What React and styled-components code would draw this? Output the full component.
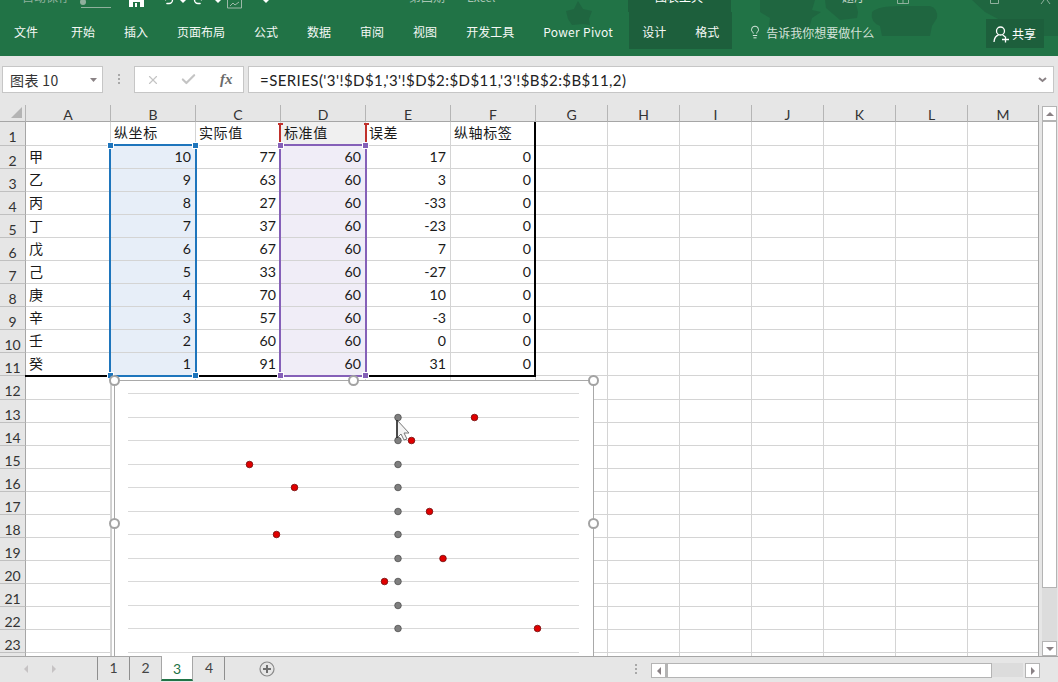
import React from 'react';
import styled, { createGlobalStyle } from 'styled-components';
import { Lightbulb, X, Check, Undo2, Redo2 } from 'lucide-react';

const GlobalStyle = createGlobalStyle`
  html, body { margin: 0; padding: 0; background: #fff; }
  body { font-family: "Noto Sans CJK SC", "Noto Sans", sans-serif; }
`;

const CJK = '"Noto Sans CJK SC", "Noto Sans", sans-serif';
const GREEN = '#217346';
const DARK = '#1d5f3c';

const Page = styled.div`
  width: 1058px;
  height: 682px;
  display: flex;
  flex-direction: column;
  overflow: hidden;
  background: #e6e6e6;
`;

// ribbon
const Ribbon = styled.div`
  position: relative;
  height: 56px;
  flex: none;
  background: ${GREEN};
  color: #fff;
`;

const Decor = styled.svg`
  position: absolute;
  left: 0;
  top: 0;
`;

const TitleRow = styled.div`
  position: relative;
  display: flex;
  height: 12px;
  padding-left: 22px;
  overflow: hidden;
`;

const TitleSlot = styled.div`
  flex: none;
  width: ${p => p.$w}px;
  height: 12px;
  padding-left: ${p => p.$pl || 0}px;
  box-sizing: border-box;
  background: ${p => (p.$dark ? DARK : 'transparent')};
  color: ${p => p.$color || '#fff'};
  font-size: 12px;
  line-height: 14px;
  white-space: nowrap;

  & > span {
    display: block;
    margin-top: -10px;
  }
  & > svg {
    display: block;
  }
`;

const UndoIcon = styled(Undo2)`
  margin-top: -9px;
`;

const RedoIcon = styled(Redo2)`
  margin-top: -9px;
`;

const TabRow = styled.div`
  position: relative;
  display: flex;
  align-items: flex-start;
  height: 44px;
`;

const Tab = styled.div`
  flex: none;
  height: 37px;
  line-height: 40px;
  padding: 0 14.5px;
  margin-left: ${p => p.$ml || 0}px;
  font-size: 12px;
  letter-spacing: ${p => p.$ls || 0}px;
  color: #f4f8f5;
  white-space: nowrap;
`;

const ContextTabs = styled.div`
  display: flex;
  flex: none;
  width: 103px;
  height: 37px;
  margin-left: 1.5px;
  background: ${DARK};
  box-sizing: border-box;
  padding-left: 13px;
  & > div {
    padding: 0;
    margin-right: 29px;
  }
`;

const TellMe = styled.div`
  display: flex;
  align-items: center;
  gap: 4px;
  flex: none;
  height: 40px;
  margin-left: 16px;
  font-size: 12px;
  color: #d3e2d9;
  white-space: nowrap;
`;

const ShareButton = styled.div`
  position: absolute;
  left: 986px;
  top: 7px;
  width: 58px;
  height: 29px;
  display: flex;
  align-items: center;
  gap: 2px;
  padding-left: 7px;
  box-sizing: border-box;
  background: ${DARK};
  font-size: 12px;
`;

// formula bar
const FormulaBar = styled.div`
  flex: none;
  height: 49px;
  box-sizing: border-box;
  padding: 10px 4px 12px 2px;
  display: flex;
  background: #e6e6e6;
`;

const Field = styled.div`
  flex: ${p => (p.$grow ? 1 : 'none')};
  width: ${p => (p.$w ? `${p.$w}px` : 'auto')};
  margin-left: ${p => p.$ml || 0}px;
  box-sizing: border-box;
  display: flex;
  align-items: center;
  background: #fff;
  border: 1px solid #c6c6c6;
`;

const NameText = styled.span`
  flex: 1;
  padding-left: 7px;
  font-size: 14px;
  letter-spacing: 0.4px;
  color: #333;
`;

const NameArrow = styled.svg`
  margin-right: 5px;
`;

const FormulaArrow = styled.svg`
  margin-left: auto;
  margin-right: 6px;
`;

const Dots = styled.div`
  width: 2px;
  height: 10px;
  margin: ${p => p.$m};
  flex: none;
  background: repeating-linear-gradient(to bottom, #a8a8a8 0 2px, transparent 2px 4px);
`;

const CancelIcon = styled(X)`
  margin-left: 11px;
`;

const EnterIcon = styled(Check)`
  margin-left: 20px;
`;

const Fx = styled.span`
  font-family: "Liberation Serif", serif;
  font-style: italic;
  font-weight: 700;
  font-size: 15px;
  color: #6a6a6a;
  margin-left: 23px;
`;

const FormulaText = styled.span`
  padding-left: 11px;
  font-family: "Lato", sans-serif;
  font-size: 15px;
  letter-spacing: 0.43px;
  color: #222;
  white-space: nowrap;
`;

// sheet
const SheetArea = styled.div`
  flex: none;
  height: 551px;
  display: flex;
  background: #e6e6e6;
`;

const GridWrap = styled.div`
  position: relative;
  flex: none;
  width: 1039px;
  height: 551px;
  box-sizing: border-box;
  overflow: hidden;
  background: #fff;
  border-right: 1px solid #a6a6a6;
`;

const Grid = styled.div`
  display: grid;
  grid-template-columns: 26px repeat(6, 85px) repeat(6, 72px) 71px;
  grid-template-rows: 17px 24px repeat(23, 23.05px);
`;

const ColHead = styled.div`
  box-sizing: border-box;
  background: #e6e6e6;
  border-bottom: 1px solid #a6a6a6;
  border-right: 1px solid #b5b5b5;
  text-align: center;
  font-family: "Lato", sans-serif;
  font-size: 14px;
  line-height: 19px;
  color: #333;
  overflow: hidden;
`;

const Corner = styled(ColHead)`
  position: relative;
  &::after {
    content: '';
    position: absolute;
    right: 3px;
    bottom: 3px;
    border-style: solid;
    border-width: 0 0 11px 11px;
    border-color: transparent transparent #b4b4b4 transparent;
  }
`;

const RowHead = styled.div`
  box-sizing: border-box;
  background: #e6e6e6;
  border-bottom: 1px solid #c0c0c0;
  border-right: 1px solid #a6a6a6;
  text-align: center;
  font-family: "Lato", sans-serif;
  font-size: 14px;
  line-height: 29px;
  color: #333;
  overflow: hidden;
`;

const Cell = styled.div`
  box-sizing: border-box;
  border-right: 1px solid #d4d4d4;
  border-bottom: 1px solid #d4d4d4;
  background: ${p => p.$fill || '#fff'};
  padding: 0 4px 0 ${p => (p.$num ? 4 : 3)}px;
  text-align: ${p => (p.$num ? 'right' : 'left')};
  font-family: ${p => (p.$num ? '"Lato", sans-serif' : CJK)};
  font-size: ${p => (p.$num ? '14.2px' : '14px')};
  letter-spacing: ${p => (p.$num ? 0 : 0.6)}px;
  line-height: ${p => (p.$num ? 22 : 21)}px;
  color: #1a1a1a;
  white-space: nowrap;
  overflow: hidden;
`;

// overlays on top of the cells
const TableEdge = styled.div`
  position: absolute;
  left: ${p => p.$x}px;
  top: ${p => p.$y}px;
  width: ${p => p.$w}px;
  height: ${p => p.$h}px;
  background: #000;
`;

const Range = styled.div`
  position: absolute;
  left: ${p => p.$x}px;
  top: ${p => p.$y}px;
  width: ${p => p.$w}px;
  height: ${p => p.$h}px;
  box-sizing: border-box;
  border: 2px solid ${p => p.$color};
  border-bottom-width: ${p => (p.$open ? 0 : 2)}px;
  border-top-width: ${p => (p.$open ? 0 : 2)}px;
`;

const Grip = styled.div`
  position: absolute;
  left: ${p => p.$x - 3}px;
  top: ${p => p.$y - 3}px;
  width: 5px;
  height: 5px;
  background: ${p => p.$color};
  outline: 1px solid #fff;
`;

const Cap = styled.div`
  position: absolute;
  left: ${p => p.$x - 2}px;
  top: 18px;
  width: 5px;
  height: 2px;
  background: #c0302b;
`;

const ChartFrame = styled.div`
  position: absolute;
  left: 114px;
  top: 275px;
  width: 480px;
  height: 320px;
  box-sizing: border-box;
  background: #fff;
  border: 1px solid #a9a9a9;
  box-shadow: -2px 0 0 #fff, -3px 0 0 #cfcfcf;
`;

const ChartSvg = styled.svg`
  display: block;
`;

const Handle = styled.div`
  position: absolute;
  left: ${p => p.$x - 5}px;
  top: ${p => p.$y - 5}px;
  width: 11px;
  height: 11px;
  box-sizing: border-box;
  border: 2px solid #a3a3a3;
  border-radius: 50%;
  background: #fff;
`;

const Pointer = styled.svg`
  position: absolute;
  left: 392px;
  top: 312px;
`;

// scrollbars
const VScroll = styled.div`
  flex: none;
  width: 19px;
  box-sizing: border-box;
  padding: 1px 1px 0 3px;
  display: flex;
  flex-direction: column;
`;

const ScrollBtn = styled.div`
  flex: none;
  width: 15px;
  height: 15px;
  box-sizing: border-box;
  background: #fff;
  border: 1px solid #b4b4b4;
  display: flex;
  align-items: center;
  justify-content: center;
`;

const Tri = styled.i`
  display: block;
  width: 0;
  height: 0;
  border-style: solid;
  border-color: transparent;
  border-width: 4px;
  ${p => p.$dir === 'up' && 'border-bottom-color: #8a8285; border-top-width: 0;'}
  ${p => p.$dir === 'down' && 'border-top-color: #8a8285; border-bottom-width: 0;'}
  ${p => p.$dir === 'left' && 'border-right-color: #8a8285; border-left-width: 0;'}
  ${p => p.$dir === 'right' && 'border-left-color: #8a8285; border-right-width: 0;'}
`;

const VThumb = styled.div`
  flex: none;
  height: 467px;
  box-sizing: border-box;
  background: #fff;
  border: 1px solid #b4b4b4;
`;

const VTrack = styled.div`
  flex: 1;
  background: #dcdcdc;
`;

// sheet tabs
const TabBar = styled.div`
  flex: 1;
  display: flex;
  align-items: flex-start;
  box-sizing: border-box;
  border-top: 1px solid #a6a6a6;
  background: #e6e6e6;
`;

const NavArrows = styled.div`
  flex: none;
  width: 97px;
  height: 24px;
  display: flex;
  align-items: center;
  gap: 24px;
  padding-left: 24px;
  box-sizing: border-box;
  i { opacity: 0.35; }
`;

const SheetTab = styled.div`
  flex: none;
  width: 32px;
  box-sizing: border-box;
  margin-top: ${p => (p.$active ? -1 : 0)}px;
  height: ${p => (p.$active ? 25 : 23)}px;
  text-align: center;
  font-family: "Lato", sans-serif;
  font-size: 14px;
  line-height: ${p => (p.$active ? 25 : 22)}px;
  color: ${p => (p.$active ? GREEN : '#444')};
  background: ${p => (p.$active ? '#fff' : 'transparent')};
  border-left: 1px solid ${p => (p.$active ? '#a6a6a6' : p.$nosep ? 'transparent' : '#8f8f8f')};
  border-right: ${p => (p.$last ? '1px solid #8f8f8f' : p.$active ? '1px solid #a6a6a6' : '0')};
  border-bottom: ${p => (p.$active ? `2px solid ${GREEN}` : '0')};
`;

const AddSheet = styled.svg`
  flex: none;
  margin: 4px 0 0 34px;
`;

const HScroll = styled.div`
  flex: none;
  margin: 6px 0 0 14px;
  display: flex;
  height: 15px;
`;

const HThumb = styled.div`
  width: 326px;
  box-sizing: border-box;
  background: #fff;
  border: 1px solid #b4b4b4;
  border-left-width: 2px;
`;

const HTrack = styled.div`
  width: 31px;
  height: 14px;
  background: #dcdcdc;
  margin-right: 2px;
`;

const headers = ['A', 'B', 'C', 'D', 'E', 'F', 'G', 'H', 'I', 'J', 'K', 'L', 'M'];
const labels = ['纵坐标', '实际值', '标准值', '误差', '纵轴标签'];
const rowsData = [
  ['甲', 10, 77, 60, 17, 0],
  ['乙', 9, 63, 60, 3, 0],
  ['丙', 8, 27, 60, -33, 0],
  ['丁', 7, 37, 60, -23, 0],
  ['戊', 6, 67, 60, 7, 0],
  ['己', 5, 33, 60, -27, 0],
  ['庚', 4, 70, 60, 10, 0],
  ['辛', 3, 57, 60, -3, 0],
  ['壬', 2, 60, 60, 0, 0],
  ['癸', 1, 91, 60, 31, 0],
];

const fills = { 1: '#e7eef8', 3: '#f0edf7' };
const rowLines = [393, 417, 440, 464, 487, 511, 534, 558, 581, 605, 628, 652];
const dotRows = [417, 440, 464, 487, 511, 534, 558, 581, 605, 628];

function Sheet() {
  const cells = [];
  cells.push(<Corner key="corner" />);
  headers.forEach(h => cells.push(<ColHead key={h}>{h}</ColHead>));
  for (let r = 1; r <= 24; r++) {
    cells.push(<RowHead key={`h${r}`}>{r}</RowHead>);
    for (let c = 0; c < 13; c++) {
      let content = null;
      let num = false;
      let fill;
      if (r === 1 && c >= 1 && c <= 5) {
        content = labels[c - 1];
        if (c === 3) fill = '#f0f0f0';
      } else if (r >= 2 && r <= 11 && c <= 5) {
        content = rowsData[r - 2][c];
        num = c > 0;
        fill = fills[c];
      }
      cells.push(<Cell key={`${r}-${c}`} $num={num} $fill={fill}>{content}</Cell>);
    }
  }
  return <Grid>{cells}</Grid>;
}

function Chart() {
  return (
    <ChartFrame>
      <ChartSvg width="478" height="318">
        {rowLines.map(y => (
          <line key={y} x1="13" x2="464" y1={y - 380.5} y2={y - 380.5} stroke="#d9d9d9" />
        ))}
        {rowsData.map((row, i) => (
          <circle key={`g${i}`} cx={283} cy={dotRows[i] - 380.5} r="3.3" fill="#7f7f7f" stroke="#505050" strokeWidth="0.8" />
        ))}
        {rowsData.map((row, i) => (
          row[2] !== 60 && (
            <circle
              key={`r${i}`}
              cx={283 + (row[2] - 60) * 4.5}
              cy={dotRows[i] - 380.5}
              r="3.3"
              fill="#e00000"
              stroke="#6e0d0d"
              strokeWidth="0.8"
            />
          )
        ))}
      </ChartSvg>
    </ChartFrame>
  );
}

export default function App() {
  return (
    <Page>
      <GlobalStyle />
      <Ribbon>
        <Decor width="1058" height="56" fill="#1f6640">
          <path d="M578 1 L583 9 L592 11 L589 19 L590 25 L583 24 L572 25 L568 19 L566 11 L574 9 Z" />
          <path d="M760 0 L815 0 L812 10 L821 12 L812 18 L808 32 L800 35 L775 35 L769 26 L770 18 L760 12 Z" />
          <path d="M825 0 L855 0 L858 12 L857 18 L840 20 L833 14 L826 8 Z" />
          <path d="M872 12 Q878 6 900 6 L930 6 Q938 8 937 18 L932 26 L930 36 L882 36 L880 26 Q870 22 872 12 Z" />
          <path d="M972 0 L1058 0 L1058 36 L1010 36 L1000 20 L985 12 Z" />
        </Decor>
        <TitleRow>
          <TitleSlot $w={58} $color="#8fb09d"><span>自动保存</span></TitleSlot>
          <TitleSlot $w={49}>
            <svg width="32" height="10">
              <circle cx="3" cy="2" r="3" fill="#8fb09d" />
              <rect x="1" y="7" width="30" height="1" fill="#8fb09d" />
            </svg>
          </TitleSlot>
          <TitleSlot $w={31}>
            <svg width="15" height="8">
              <path d="M0 0 H15 V7 H0 Z" fill="#fff" />
              <rect x="4" y="2" width="7" height="5" fill={GREEN} />
              <rect x="6" y="3" width="2" height="4" fill="#fff" />
            </svg>
          </TitleSlot>
          <TitleSlot $w={20}><UndoIcon size={15} strokeWidth={2.2} /></TitleSlot>
          <TitleSlot $w={12}><svg width="6" height="4"><path d="M0 0 H6 L3 3 Z" fill="#fff" /></svg></TitleSlot>
          <TitleSlot $w={23}><RedoIcon size={15} strokeWidth={2.2} /></TitleSlot>
          <TitleSlot $w={12}><svg width="6" height="4"><path d="M0 0 H6 L3 3 Z" fill="#fff" /></svg></TitleSlot>
          <TitleSlot $w={36}>
            <svg width="16" height="9">
              <path d="M0.5 0 V8 H14.5 V0" fill="none" stroke="#9db8a8" />
              <path d="M3 6 L6 3 L8 5 L12 2" fill="none" stroke="#9db8a8" />
            </svg>
          </TitleSlot>
          <TitleSlot $w={146}><svg width="6" height="4"><path d="M0 0 H6 L3 3 Z" fill="#fff" /></svg></TitleSlot>
          <TitleSlot $w={58} $color="#a9c4b4"><span>第四期</span></TitleSlot>
          <TitleSlot $w={161} $color="#a9c4b4"><span>Excel</span></TitleSlot>
          <TitleSlot $w={103} $pl={27} $dark><span>图表工具</span></TitleSlot>
          <TitleSlot $w={111} />
          <TitleSlot $w={55} $color="#c6d8cd"><span>题厅</span></TitleSlot>
          <TitleSlot $w={93}>
            <svg width="12" height="5"><path d="M0.5 0 V3.5 H11.5 V0 M6 0 V3" fill="none" stroke="#8fb09d" /></svg>
          </TitleSlot>
          <TitleSlot $w={50}>
            <svg width="9" height="5"><path d="M0.5 0 V3.5 H8.5 V0" fill="none" stroke="#8fb09d" /></svg>
          </TitleSlot>
          <TitleSlot $w={12}>
            <svg width="11" height="5"><path d="M1 4 L4 0 M10 4 L7 0" fill="none" stroke="#8fb09d" /></svg>
          </TitleSlot>
        </TitleRow>
        <TabRow>
          <Tab $ml={-0.5}>文件</Tab>
          <Tab $ml={4}>开始</Tab>
          <Tab>插入</Tab>
          <Tab>页面布局</Tab>
          <Tab>公式</Tab>
          <Tab>数据</Tab>
          <Tab>审阅</Tab>
          <Tab>视图</Tab>
          <Tab>开发工具</Tab>
          <Tab $ls={0.3}>Power Pivot</Tab>
          <ContextTabs>
            <Tab>设计</Tab>
            <Tab>格式</Tab>
          </ContextTabs>
          <TellMe>
            <Lightbulb size={14} strokeWidth={1.4} color="#fff" />
            告诉我你想要做什么
          </TellMe>
          <ShareButton>
            <svg width="17" height="18" viewBox="0 0 17 18" fill="none" stroke="#fff" strokeWidth="1.3">
              <circle cx="7.5" cy="6" r="4" />
              <path d="M1 17 Q1.5 11 5.5 10 M9.5 10 Q11 10.5 12 12" />
              <path d="M9 14.5 H16 M12.5 11.5 V17.5" />
            </svg>
            共享
          </ShareButton>
        </TabRow>
      </Ribbon>

      <FormulaBar>
        <Field $w={101}>
          <NameText>图表 10</NameText>
          <NameArrow width="7" height="4"><path d="M0 0 H7 L3.5 4 Z" fill="#8a8285" /></NameArrow>
        </Field>
        <Dots $m="8px 0 0 15px" />
        <Field $w={110} $ml={14}>
          <CancelIcon size={14} color="#c4c4c4" strokeWidth={2} />
          <EnterIcon size={17} color="#c4c4c4" strokeWidth={3} />
          <Fx>fx</Fx>
        </Field>
        <Field $grow $ml={4}>
          <FormulaText>=SERIES('3'!$D$1,'3'!$D$2:$D$11,'3'!$B$2:$B$11,2)</FormulaText>
          <FormulaArrow width="9" height="6">
            <path d="M1 1 L4.5 4 L8 1" fill="none" stroke="#8a8285" strokeWidth="2" />
          </FormulaArrow>
        </Field>
      </FormulaBar>

      <SheetArea>
        <GridWrap>
          <Sheet />
          <TableEdge $x={25} $y={270} $w={511} $h={2} />
          <TableEdge $x={534} $y={17} $w={2} $h={255} />
          <Range $x={109} $y={39} $w={88} $h={233} $color="#1e75bc" />
          <Range $x={279} $y={39} $w={88} $h={233} $color="#8560b8" />
          <Range $x={279} $y={18} $w={88} $h={21} $color="#c0302b" $open />
          <Cap $x={280} />
          <Cap $x={366} />
          <Chart />
          <Grip $x={111} $y={41} $color="#1e75bc" />
          <Grip $x={196} $y={41} $color="#1e75bc" />
          <Grip $x={111} $y={271} $color="#1e75bc" />
          <Grip $x={196} $y={271} $color="#1e75bc" />
          <Grip $x={281} $y={41} $color="#8560b8" />
          <Grip $x={366} $y={41} $color="#8560b8" />
          <Grip $x={281} $y={271} $color="#8560b8" />
          <Grip $x={366} $y={271} $color="#8560b8" />
          <Handle $x={114} $y={275} />
          <Handle $x={353} $y={275} />
          <Handle $x={593} $y={275} />
          <Handle $x={114} $y={418} />
          <Handle $x={593} $y={418} />
          <Pointer width="18" height="24" viewBox="0 0 18 24">
            <path d="M5 3 L5 21 L9 17 L12 23 L15 22 L12 16 L17 16 Z" fill="#f4f4f4" stroke="#777" strokeWidth="1" />
            <path d="M5 3 L5 21" stroke="#000" strokeWidth="1.2" />
          </Pointer>
        </GridWrap>
        <VScroll>
          <ScrollBtn><Tri $dir="up" /></ScrollBtn>
          <VThumb />
          <VTrack />
          <ScrollBtn><Tri $dir="down" /></ScrollBtn>
        </VScroll>
      </SheetArea>

      <TabBar>
        <NavArrows>
          <Tri $dir="left" />
          <Tri $dir="right" />
        </NavArrows>
        <SheetTab>1</SheetTab>
        <SheetTab>2</SheetTab>
        <SheetTab $active>3</SheetTab>
        <SheetTab $nosep $last>4</SheetTab>
        <AddSheet width="16" height="16" viewBox="0 0 16 16" fill="none">
          <circle cx="8" cy="8" r="7" stroke="#8a8a8a" strokeWidth="1.2" />
          <path d="M4 8 H12 M8 4 V12" stroke="#6f6f6f" strokeWidth="2" />
        </AddSheet>
        <Dots $m="7px 0 0 360px" />
        <HScroll>
          <ScrollBtn><Tri $dir="left" /></ScrollBtn>
          <HThumb />
          <HTrack />
          <ScrollBtn><Tri $dir="right" /></ScrollBtn>
        </HScroll>
      </TabBar>
    </Page>
  );
}
